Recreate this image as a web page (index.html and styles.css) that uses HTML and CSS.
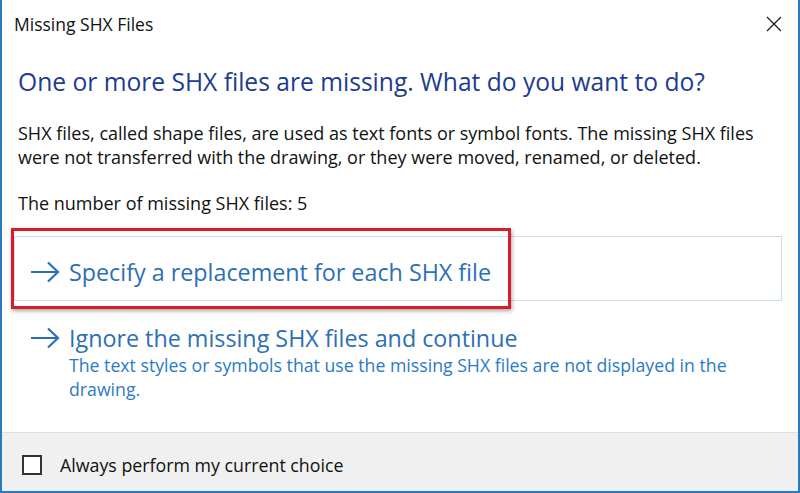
FILE: index.html
```html
<!DOCTYPE html>
<html lang="en">
<head>
    <meta charset="UTF-8">
    <meta name="viewport" content="width=device-width, initial-scale=1.0">
    <title>Missing SHX Files</title>
    <link rel="stylesheet" href="styles.css">
</head>
<body>
    <div class="window">
        <div class="titlebar">
            <span class="title">Missing SHX Files</span>
            <button class="close" aria-label="Close">
                <svg width="16" height="16" viewBox="0 0 16 16">
                    <path d="M1 1 L15 15 M15 1 L1 15" stroke="#1a1a1a" stroke-width="1.3" fill="none"/>
                </svg>
            </button>
        </div>

        <div class="content">
            <h1>One or more SHX files are missing. What do you want to do?</h1>
            <p class="info">SHX files, called shape files, are used as text fonts or symbol fonts. The missing SHX files were not transferred with the drawing, or they were moved, renamed, or deleted.</p>
            <p class="count">The number of missing SHX files: 5</p>

            <div class="command selected">
                <svg class="arrow" width="30" height="22" viewBox="0 0 30 22">
                    <path d="M1 11 H28 M18 1.5 L28 11 L18 20.5" stroke="#2a6fb8" stroke-width="2.2" fill="none"/>
                </svg>
                <div class="command-text">
                    <div class="command-title">Specify a replacement for each SHX file</div>
                </div>
                <div class="highlight"></div>
            </div>

            <div class="command">
                <svg class="arrow" width="30" height="22" viewBox="0 0 30 22">
                    <path d="M1 11 H28 M18 1.5 L28 11 L18 20.5" stroke="#2a6fb8" stroke-width="2.2" fill="none"/>
                </svg>
                <div class="command-text">
                    <div class="command-title">Ignore the missing SHX files and continue</div>
                    <div class="command-note">The text styles or symbols that use the missing SHX files are not displayed in the drawing.</div>
                </div>
            </div>
        </div>

        <div class="footer">
            <label class="check">
                <span class="box"></span>
                Always perform my current choice
            </label>
        </div>
    </div>
</body>
</html>
```

FILE: styles.css
```css
* {
    box-sizing: border-box;
}
body {
    margin: 0;
    font-family: "Open Sans", "Noto Sans", sans-serif;
    background: #fff;
    color: #1a1a1a;
}
.window {
    width: 800px;
    height: 493px;
    display: flex;
    flex-direction: column;
    border: 2px solid #2b79c4;
    border-top: none;
    background: #fff;
}
.titlebar {
    height: 48px;
    display: flex;
    align-items: center;
    justify-content: space-between;
    padding: 0 14px 0 12px;
}
.title {
    font-size: 17.5px;
    color: #111;
}
.close {
    border: none;
    background: none;
    padding: 0;
    width: 20px;
    height: 20px;
    display: flex;
    align-items: center;
    justify-content: center;
    cursor: pointer;
}
.content {
    flex: 1;
    padding: 0 16px 0 12px;
}
h1 {
    margin: 19px 0 0 4px;
    font-size: 24.6px;
    line-height: 30px;
    font-weight: normal;
    color: #1d3c8f;
}
.info {
    margin: 24px 0 0 4px;
    font-size: 18px;
    line-height: 24px;
    color: #111;
}
.count {
    margin: 22px 0 0 4px;
    font-size: 18px;
    line-height: 24px;
    color: #111;
}
.command {
    position: relative;
    display: flex;
    align-items: flex-start;
    border: 1px solid transparent;
    padding: 21px 16px 8px 15px;
    min-height: 65px;
}
.command.selected {
    margin-top: 21px;
    border-color: #c8dcec;
}
.command + .command {
    padding-top: 22px;
}
.arrow {
    flex: none;
    margin-top: 3px;
}
.command-text {
    margin-left: 9px;
}
.command-title {
    font-size: 23.3px;
    line-height: 28px;
    color: #2c6fb5;
}
.command-note {
    margin-top: 1px;
    font-size: 17.7px;
    line-height: 24px;
    color: #2a7ac6;
    padding-right: 20px;
}
.highlight {
    position: absolute;
    left: -4px;
    top: -9px;
    width: 500px;
    height: 81px;
    border: 3px solid #d41f2a;
    box-shadow: 1px 2px 4px rgba(0, 0, 0, 0.35);
    pointer-events: none;
}
.footer {
    height: 59px;
    background: #f0f0f0;
    border-top: 1px solid #dedede;
    display: flex;
    align-items: center;
    padding: 6px 0 0 20px;
}
.check {
    display: flex;
    align-items: center;
    font-size: 17.8px;
    color: #111;
}
.box {
    width: 20px;
    height: 20px;
    border: 2px solid #333;
    background: #fff;
    margin-right: 18px;
}
```
